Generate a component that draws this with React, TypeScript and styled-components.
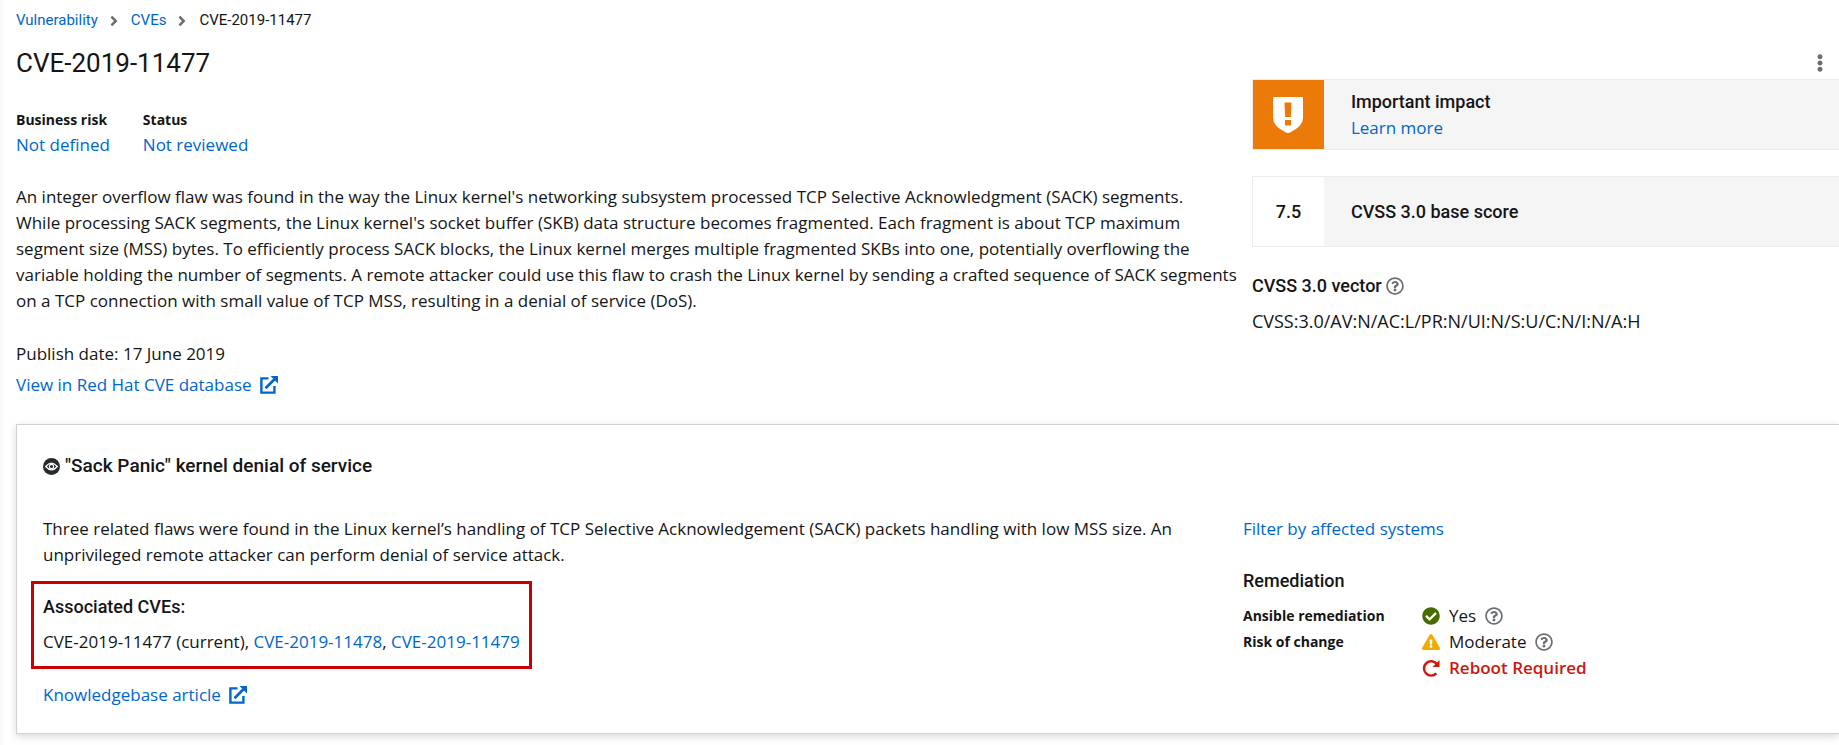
import React from 'react';
import styled, { createGlobalStyle } from 'styled-components';
import {
  FaAngleRight,
  FaCheckCircle,
  FaExclamationTriangle,
  FaEllipsisV,
  FaRegQuestionCircle,
} from 'react-icons/fa';

const textFont = `'Open Sans', 'Noto Sans', sans-serif`;
const displayFont = `Roboto, 'Open Sans', sans-serif`;

const GlobalStyle = createGlobalStyle`
  *, *::before, *::after { box-sizing: border-box; }
  body {
    margin: 0;
    background: #fff;
    color: #151515;
    font-family: ${textFont};
    font-size: 17px;
    line-height: 26px;
  }
  h1, h2, h3, p, ol, dl, dd { margin: 0; padding: 0; }
`;

const Page = styled.main`
  min-height: 100vh;
  padding: 10px 0 10px 16px;
  overflow: hidden;
  box-shadow: inset 5px 0 5px -4px rgba(3, 3, 3, 0.06);
`;

const Link = styled.a`
  color: #06c;
  text-decoration: none;
  &:hover { text-decoration: underline; }
`;

const LinkButton = styled.button`
  display: block;
  padding: 0;
  border: 0;
  background: none;
  color: #06c;
  font: inherit;
  cursor: pointer;
`;

const Crumbs = styled.ol`
  display: flex;
  align-items: center;
  list-style: none;
  font-family: ${displayFont};
  font-size: 15px;
  line-height: 21px;
`;

const Crumb = styled.li`
  display: flex;
  align-items: center;
`;

const CrumbDivider = styled(FaAngleRight)`
  width: 16px;
  height: 16px;
  margin: 0 9px 0 8px;
  color: #6a6e73;
`;

const Header = styled.header`
  display: flex;
  align-items: center;
  justify-content: space-between;
  margin-top: 16px;
  padding-right: 10px;
`;

const Title = styled.h1`
  font-family: ${displayFont};
  font-size: 26px;
  font-weight: 400;
  line-height: 32px;
`;

const IconButton = styled.button`
  display: flex;
  padding: 0;
  border: 0;
  background: none;
  color: #6a6e73;
  font-size: 18px;
  cursor: pointer;
`;

const Overview = styled.section`
  display: grid;
  grid-template-columns: 40fr 19fr;
`;

const Details = styled.div`
  padding-top: 30px;
`;

const Facts = styled.dl`
  display: flex;
  gap: 33px;
`;

const FactLabel = styled.dt`
  margin-bottom: 1px;
  font-size: 14px;
  font-weight: 700;
  line-height: 22px;
`;

const Description = styled.p`
  margin: 26px 0 27px;
`;

const Published = styled.p`
  margin-bottom: 5px;
`;

const IconLink = styled(Link)`
  display: inline-flex;
  align-items: center;
  gap: 8px;
`;

const Scores = styled.aside`
  display: flex;
  flex-direction: column;
`;

const ScoreCard = styled.div`
  display: flex;
  height: 71px;
  margin-bottom: 26px;
  border: 1px solid #ededed;
  border-right: 0;
  background: #f5f5f5;
`;

const ScoreBadge = styled.div<{ $color: string }>`
  display: flex;
  flex: 0 0 71px;
  align-items: center;
  justify-content: center;
  background: ${(p) => p.$color};
  font-family: ${displayFont};
  font-size: 18px;
  font-weight: 500;
`;

const ScoreText = styled.div`
  display: flex;
  flex-direction: column;
  align-items: flex-start;
  justify-content: center;
  padding-left: 27px;
`;

const SubHeading = styled.h3`
  display: flex;
  align-items: center;
  gap: 4px;
  font-family: ${displayFont};
  font-size: 18px;
  font-weight: 500;
`;

const VectorHeading = styled(SubHeading)`
  margin-bottom: 9px;
`;

const Vector = styled.p`
  font-size: 18px;
`;

const Card = styled.section`
  margin-top: 26px;
  padding: 26px 0 25px 26px;
  border: 1px solid #d2d2d2;
  border-right: 0;
  background: #fff;
  box-shadow: 0 4px 8px rgba(3, 3, 3, 0.1), 0 0 8px rgba(3, 3, 3, 0.06);
`;

const CardTitle = styled.h2`
  display: flex;
  align-items: center;
  gap: 5px;
  margin-bottom: 35px;
  font-family: ${displayFont};
  font-size: 19px;
  font-weight: 500;
  line-height: 30px;
`;

const CardBody = styled.div`
  display: grid;
  grid-template-columns: 2fr 1fr;
  gap: 8px;
`;

const Associated = styled.div`
  width: fit-content;
  margin: 13px 0 13px -12px;
  padding: 10px 9px 11px;
  border: 3px solid #c00;
`;

const AssociatedHeading = styled(SubHeading)`
  margin-bottom: 9px;
`;

const RemediationHeading = styled(SubHeading)`
  margin: 26px 0 9px;
`;

const RemediationList = styled.dl`
  display: grid;
  grid-template-columns: 179px 1fr;
`;

const RemediationLabel = styled.dt`
  font-size: 14px;
  font-weight: 700;
`;

const RemediationValue = styled.dd<{ $strong?: boolean }>`
  display: flex;
  grid-column: 2;
  align-items: center;
  gap: 9px;
  color: ${(p) => (p.$strong ? '#c9190b' : 'inherit')};
  font-weight: ${(p) => (p.$strong ? 600 : 400)};

  > svg {
    width: 18px;
    height: 18px;
  }
`;

const OpenIcon = () => (
  <svg width="18" height="18" viewBox="0 0 18 18" fill="none" aria-hidden="true">
    <path d="M8.500 2.400H1.400v14.200h13V10" stroke="currentColor" strokeWidth="2.400" />
    <path d="M5.500 12.300l9-9" stroke="currentColor" strokeWidth="2.700" />
    <path d="M10.500 0h7.500v7.500z" fill="currentColor" />
  </svg>
);

const ShieldIcon = () => (
  <svg width="30" height="36" viewBox="0 0 30 36" aria-hidden="true">
    <path d="M1 0h28q1 0 1 1v20q0 8-12.500 14.200Q15 36.800 12.500 35.200Q0 29 0 21V1q0-1 1-1z" fill="#fff" />
    <path d="M11.500 5.500h7l-.6 14.500h-5.800zM12 23h6v5.500h-6z" fill="#ec7a08" />
  </svg>
);

const EyeIcon = () => (
  <svg width="17" height="17" viewBox="0 0 17 17" aria-hidden="true">
    <circle cx="8.500" cy="8.500" r="8.500" fill="#26292d" />
    <path
      d="M2.700 8.500Q8.500 1.800 14.300 8.500Q8.500 15.200 2.700 8.500z"
      fill="none"
      stroke="#fff"
      strokeWidth="1.300"
    />
    <circle cx="8.500" cy="8.500" r="2.100" fill="none" stroke="#fff" strokeWidth="1.100" />
  </svg>
);

const RedoIcon = () => (
  <svg width="18" height="18" viewBox="0 0 17 17" fill="none" aria-hidden="true">
    <path d="M14 4.600A6.800 6.800 0 1 0 13.600 13.600" stroke="currentColor" strokeWidth="2.300" />
    <path d="M16.500 1v6.500H10z" fill="currentColor" />
  </svg>
);

const Help = ({ label }: { label: string }) => (
  <IconButton type="button" aria-label={label}>
    <FaRegQuestionCircle />
  </IconButton>
);

export default function App() {
  return (
    <>
      <GlobalStyle />
      <Page>
        <nav aria-label="Breadcrumb">
          <Crumbs>
            <Crumb><Link href="#vulnerability">Vulnerability</Link></Crumb>
            <Crumb><CrumbDivider /><Link href="#cves">CVEs</Link></Crumb>
            <Crumb aria-current="page"><CrumbDivider />CVE-2019-11477</Crumb>
          </Crumbs>
        </nav>
        <Header>
          <Title>CVE-2019-11477</Title>
          <IconButton type="button" aria-label="Actions"><FaEllipsisV /></IconButton>
        </Header>

        <Overview>
          <Details>
            <Facts>
              <div>
                <FactLabel>Business risk</FactLabel>
                <dd><LinkButton type="button">Not defined</LinkButton></dd>
              </div>
              <div>
                <FactLabel>Status</FactLabel>
                <dd><LinkButton type="button">Not reviewed</LinkButton></dd>
              </div>
            </Facts>
            <Description>
              An integer overflow flaw was found in the way the Linux kernel's networking subsystem
              processed TCP Selective Acknowledgment (SACK) segments.<br />
              While processing SACK segments, the Linux kernel's socket buffer (SKB) data structure
              becomes fragmented. Each fragment is about TCP maximum<br />
              segment size (MSS) bytes. To efficiently process SACK blocks, the Linux kernel merges
              multiple fragmented SKBs into one, potentially overflowing the<br />
              variable holding the number of segments. A remote attacker could use this flaw to crash
              the Linux kernel by sending a crafted sequence of SACK segments<br />
              on a TCP connection with small value of TCP MSS, resulting in a denial of service (DoS).
            </Description>
            <Published>Publish date: 17 June 2019</Published>
            <IconLink href="#database">View in Red Hat CVE database<OpenIcon /></IconLink>
          </Details>

          <Scores>
            <ScoreCard>
              <ScoreBadge $color="#ec7a08"><ShieldIcon /></ScoreBadge>
              <ScoreText>
                <SubHeading>Important impact</SubHeading>
                <Link href="#impact">Learn more</Link>
              </ScoreText>
            </ScoreCard>
            <ScoreCard>
              <ScoreBadge $color="#fff">7.5</ScoreBadge>
              <ScoreText>
                <SubHeading>CVSS 3.0 base score</SubHeading>
              </ScoreText>
            </ScoreCard>
            <VectorHeading>CVSS 3.0 vector <Help label="About the CVSS vector" /></VectorHeading>
            <Vector>CVSS:3.0/AV:N/AC:L/PR:N/UI:N/S:U/C:N/I:N/A:H</Vector>
          </Scores>
        </Overview>

        <Card>
          <CardTitle><EyeIcon />"Sack Panic" kernel denial of service</CardTitle>
          <CardBody>
            <div>
              <p>
                Three related flaws were found in the Linux kernel’s handling of TCP Selective
                Acknowledgement (SACK) packets handling with low MSS size. An unprivileged remote
                attacker can perform denial of service attack.
              </p>
              <Associated>
                <AssociatedHeading>Associated CVEs:</AssociatedHeading>
                <p>
                  CVE-2019-11477 (current), <Link href="#CVE-2019-11478">CVE-2019-11478</Link>,{' '}
                  <Link href="#CVE-2019-11479">CVE-2019-11479</Link>
                </p>
              </Associated>
              <IconLink href="#article">Knowledgebase article<OpenIcon /></IconLink>
            </div>
            <div>
              <LinkButton type="button">Filter by affected systems</LinkButton>
              <RemediationHeading>Remediation</RemediationHeading>
              <RemediationList>
                <RemediationLabel>Ansible remediation</RemediationLabel>
                <RemediationValue>
                  <FaCheckCircle color="#486b00" />Yes<Help label="About Ansible remediation" />
                </RemediationValue>
                <RemediationLabel>Risk of change</RemediationLabel>
                <RemediationValue>
                  <FaExclamationTriangle color="#f0ab00" />Moderate<Help label="About risk of change" />
                </RemediationValue>
                <RemediationValue $strong><RedoIcon />Reboot Required</RemediationValue>
              </RemediationList>
            </div>
          </CardBody>
        </Card>
      </Page>
    </>
  );
}
